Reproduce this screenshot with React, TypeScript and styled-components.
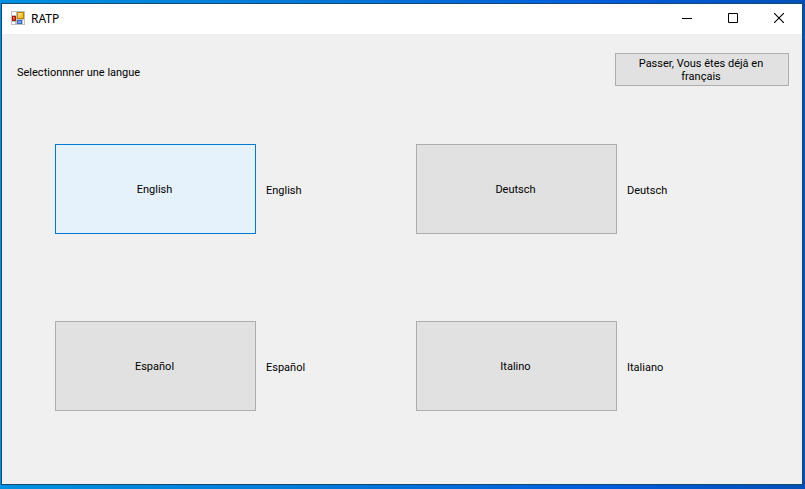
import React, { useState } from "react";
import styled, { createGlobalStyle } from "styled-components";

const GlobalStyle = createGlobalStyle`
  *, *::before, *::after { box-sizing: border-box; }
  body { margin: 0; }
`;

const Desktop = styled.div`
  display: flex;
  min-height: 100vh;
  padding: 3px 2px 4px 1px;
  background: linear-gradient(90deg, #0090e0 0%, #0078d8 40%, #005cdc 75%, #0450b8 100%);
`;

const Window = styled.main`
  flex: 1;
  display: flex;
  flex-direction: column;
  border: 1px solid #124a72;
  background: #f0f0f0;
  color: #000;
  font: 11px/13px Roboto, "Liberation Sans", Arial, sans-serif;
`;

const TitleBar = styled.header`
  display: flex;
  align-items: center;
  height: 30px;
  padding-left: 9px;
  background: #fff;
`;

const Title = styled.h1`
  flex: 1;
  margin: 0 0 0 6px;
  font: 400 12px/16px "Noto Sans", "Open Sans", sans-serif;
`;

const Caption = styled.button`
  display: flex;
  align-items: center;
  justify-content: center;
  width: 46px;
  height: 30px;
  padding: 0 0 2px;
  border: 0;
  background: transparent;
  color: #000;
`;

const Heading = styled.div`
  display: flex;
  align-items: flex-start;
  justify-content: space-between;
  padding: 19px 13px 0 15px;
`;

const Prompt = styled.h2`
  margin: 13px 0 0;
  font: inherit;
`;

const Button = styled.button<{ $active?: boolean }>`
  padding: 0 21px 0 19px;
  border: 1px solid ${(p) => (p.$active ? "#0078d7" : "#adadad")};
  background: ${(p) => (p.$active ? "#e5f1fb" : "#e1e1e1")};
  color: #000;
  font: inherit;
  outline: none;
`;

const SkipButton = styled(Button)`
  width: 174px;
  height: 33px;
`;

const Languages = styled.section`
  display: grid;
  grid-template-columns: 1fr 1fr;
  row-gap: 87px;
  padding: 58px 25px 73px 53px;
`;

const Language = styled.div`
  display: flex;
  align-items: center;
  gap: 10px;
`;

const LanguageButton = styled(Button)`
  width: 201px;
  height: 90px;
`;

const LanguageLabel = styled.label`
  padding-top: 2px;
`;

const AppIconSvg = styled.svg`
  margin-bottom: 2px;
`;

const AppIcon = () => (
  <AppIconSvg width="14" height="14" viewBox="0 0 14 14" shapeRendering="crispEdges" aria-hidden="true">
    <defs>
      <linearGradient id="gold" x1="0" y1="0" x2="1" y2="1">
        <stop offset="0" stopColor="#ffe88c" />
        <stop offset="1" stopColor="#f0b000" />
      </linearGradient>
    </defs>
    <path d="M0 0h14v14H0z" fill="#c0c0c0" />
    <path d="M1 1h4v3H1zM1 11h3v2H1zM12 9h1v4h-1z" fill="#fff" />
    <path d="M6 1h7v7H6z" fill="#b88400" />
    <path d="M7 2h5v5H7z" fill="url(#gold)" />
    <path d="M1 5h4v5H1z" fill="#a81808" />
    <path d="M2 6h2v3H2z" fill="#e04828" />
    <path d="M2 6h1v1H2z" fill="#ff9878" />
    <path d="M6 9h5v4H6z" fill="#3868c8" />
    <path d="M7 10h3v2H7z" fill="#70a8f8" />
  </AppIconSvg>
);

const MinimizeIcon = () => (
  <svg width="10" height="10" viewBox="0 0 10 10" aria-hidden="true">
    <path d="M0 5h10v1H0z" />
  </svg>
);

const MaximizeIcon = () => (
  <svg width="10" height="10" viewBox="0 0 10 10" aria-hidden="true">
    <path d="M.5.5h9v9h-9z" fill="none" stroke="currentColor" />
  </svg>
);

const CloseIcon = () => (
  <svg width="10" height="10" viewBox="0 0 10 10" aria-hidden="true">
    <path d="M0 0l10 10M10 0L0 10" fill="none" stroke="currentColor" strokeWidth="1.1" />
  </svg>
);

const languages = [
  { id: "en", button: "English", label: "English" },
  { id: "de", button: "Deutsch", label: "Deutsch" },
  { id: "es", button: "Español", label: "Español" },
  { id: "it", button: "Italino", label: "Italiano" },
];

export default function App() {
  const [active, setActive] = useState("en");
  return (
    <>
      <GlobalStyle />
      <Desktop>
        <Window>
          <TitleBar>
            <AppIcon />
            <Title>RATP</Title>
            <Caption aria-label="Réduire"><MinimizeIcon /></Caption>
            <Caption aria-label="Agrandir"><MaximizeIcon /></Caption>
            <Caption aria-label="Fermer"><CloseIcon /></Caption>
          </TitleBar>
          <Heading>
            <Prompt>Selectionnner une langue</Prompt>
            <SkipButton>Passer, Vous êtes déjâ en français</SkipButton>
          </Heading>
          <Languages>
            {languages.map((l) => (
              <Language key={l.id}>
                <LanguageButton id={l.id} $active={active === l.id} onClick={() => setActive(l.id)}>
                  {l.button}
                </LanguageButton>
                <LanguageLabel htmlFor={l.id}>{l.label}</LanguageLabel>
              </Language>
            ))}
          </Languages>
        </Window>
      </Desktop>
    </>
  );
}
